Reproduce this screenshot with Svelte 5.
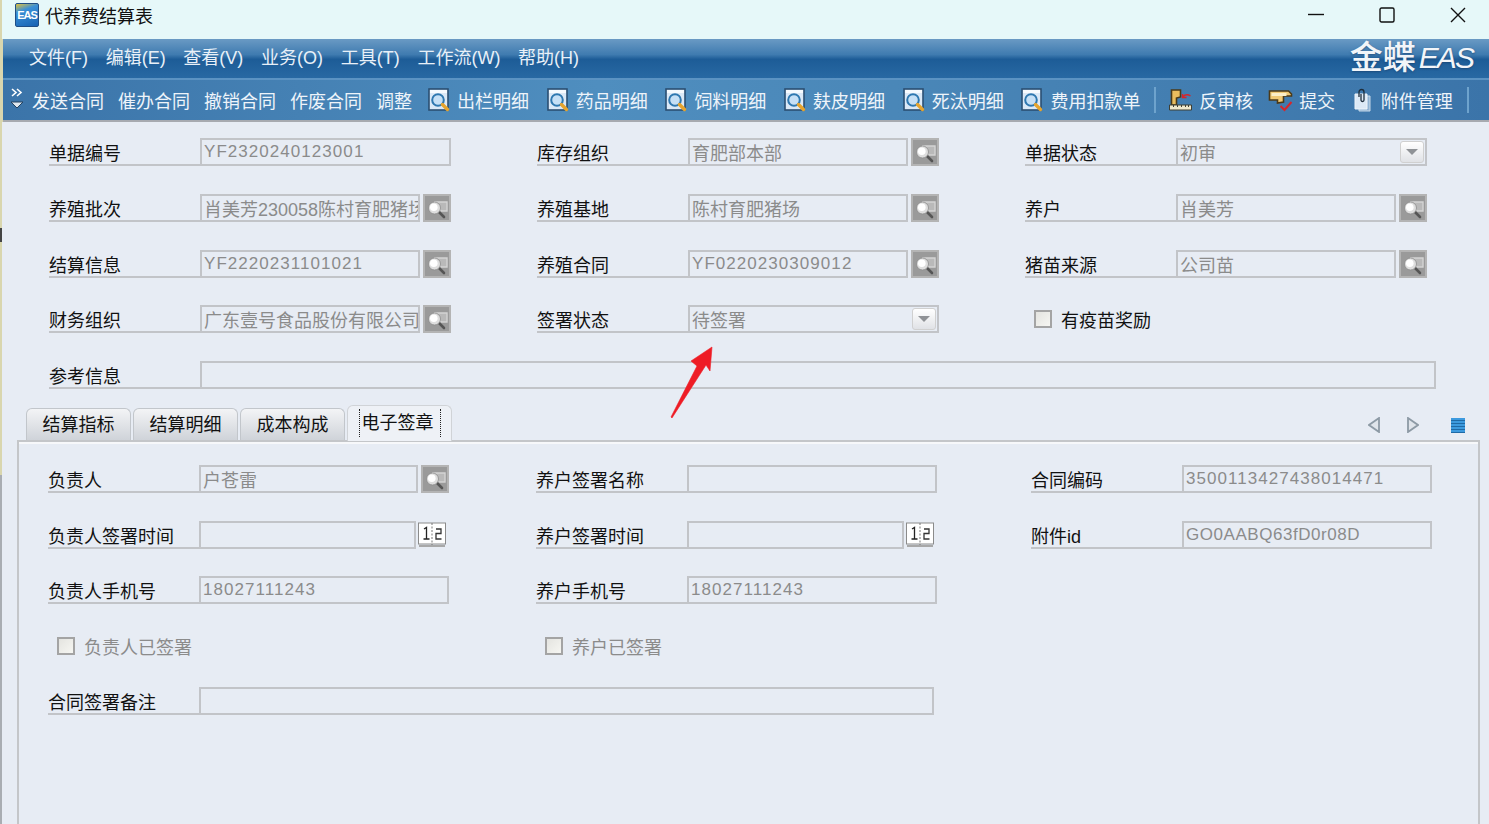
<script>
  const menus = ['文件(F)', '编辑(E)', '查看(V)', '业务(O)', '工具(T)', '工作流(W)', '帮助(H)'];
  const plainActions = ['发送合同', '催办合同', '撤销合同', '作废合同', '调整'];
  const detailActions = ['出栏明细', '药品明细', '饲料明细', '麸皮明细', '死汰明细', '费用扣款单'];

  const topFields = [
    { label: '单据编号', value: 'YF2320240123001', kind: 'text' },
    { label: '库存组织', value: '育肥部本部', kind: 'lookup' },
    { label: '单据状态', value: '初审', kind: 'select' },
    { label: '养殖批次', value: '肖美芳230058陈村育肥猪场', kind: 'lookup' },
    { label: '养殖基地', value: '陈村育肥猪场', kind: 'lookup' },
    { label: '养户', value: '肖美芳', kind: 'lookup' },
    { label: '结算信息', value: 'YF2220231101021', kind: 'lookup' },
    { label: '养殖合同', value: 'YF0220230309012', kind: 'lookup' },
    { label: '猪苗来源', value: '公司苗', kind: 'lookup' },
    { label: '财务组织', value: '广东壹号食品股份有限公司', kind: 'lookup' },
    { label: '签署状态', value: '待签署', kind: 'select' },
    { check: '有疫苗奖励', strong: true }
  ];

  const tabs = ['结算指标', '结算明细', '成本构成', '电子签章'];

  const signFields = [
    { label: '负责人', value: '户苍雷', kind: 'lookup' },
    { label: '养户签署名称', value: '', kind: 'text' },
    { label: '合同编码', value: '3500113427438014471', kind: 'text' },
    { label: '负责人签署时间', value: '', kind: 'date' },
    { label: '养户签署时间', value: '', kind: 'date' },
    { label: '附件id', value: 'GO0AABQ63fD0r08D', kind: 'text' },
    { label: '负责人手机号', value: '18027111243', kind: 'text' },
    { label: '养户手机号', value: '18027111243', kind: 'text' },
    { empty: true },
    { check: '负责人已签署' },
    { check: '养户已签署' },
    { empty: true }
  ];

  // ascii-only values are set a bit smaller and more open than the CJK ones
  const isLatin = (v) => /^[\x20-\x7e]+$/.test(v);
  const hasLower = (v) => /[a-z]/.test(v);
</script>

{#snippet detailIcon()}
  <svg class="tool-icon" viewBox="0 0 23 24">
    <rect x="1" y="1" width="19" height="21" fill="#dbe9f7" stroke="#2b4f72" stroke-width="1.6" />
    <rect x="2" y="2" width="17" height="3" fill="#f6fafe" />
    <circle cx="10" cy="12" r="5.8" fill="#c6e0f6" stroke="#2f78b0" stroke-width="2" />
    <path d="M14.5 16.5l5 5" stroke="#e6a42e" stroke-width="3.4" stroke-linecap="round" />
  </svg>
{/snippet}

{#snippet lookupButton()}
  <span class="lookup-btn">
    <svg viewBox="0 0 28 28" width="28" height="28">
      <path d="M12 8h12v9h-6z" fill="#b9b9b9" stroke="#d4d4d4" stroke-width="1.4" />
      <path d="M16 18l5 5" stroke="#555555" stroke-width="2.6" stroke-linecap="round" />
      <circle cx="11.5" cy="14" r="6" fill="#dedede" stroke="#8a8a8a" stroke-width="0.8" />
      <circle cx="10.8" cy="13.2" r="3.8" fill="#ffffff" />
    </svg>
  </span>
{/snippet}

{#snippet dateButton()}
  <svg class="date-btn" viewBox="0 0 28 26">
    <rect x="0.5" y="1" width="27" height="21" fill="#ffffff" stroke="#8b8b8b" />
    <path d="M1 23h26v2H1z" fill="#a8a8a8" />
    <path d="M14 1v22" stroke="#777777" stroke-dasharray="2 1.5" />
    <path d="M6 7l2.5-1.5V17M5.5 17h6" fill="none" stroke="#222222" stroke-width="1.3" />
    <path d="M18 7h5v4.5h-5V17h5.5" fill="none" stroke="#333333" stroke-width="1.3" />
  </svg>
{/snippet}

{#snippet field(item)}
  {#if item.empty}
    <div></div>
  {:else if item.check}
    <div class="check-row" class:strong={item.strong}>
      <span class="check-box"></span>
      <span>{item.check}</span>
    </div>
  {:else}
    <div class="field">
      <span class="field-label">{item.label}</span>
      <div class="field-box">
        <span class="field-value" class:latin={isLatin(item.value)} class:tight={hasLower(item.value)}>{item.value}</span>
        {#if item.kind === 'select'}
          <span class="drop-btn"><i></i></span>
        {/if}
      </div>
      {#if item.kind === 'lookup'}
        {@render lookupButton()}
      {:else if item.kind === 'date'}
        {@render dateButton()}
      {/if}
    </div>
  {/if}
{/snippet}

<div class="window">
  <header class="titlebar">
    <span class="app-icon">EAS</span>
    <span class="app-title">代养费结算表</span>
    <div class="win-controls">
      <svg viewBox="0 0 16 16"><path d="M0 7.5h16" /></svg>
      <svg viewBox="0 0 16 16"><rect x="1" y="1" width="14" height="14" rx="1.5" /></svg>
      <svg viewBox="0 0 16 16"><path d="M1 1l14 14M15 1L1 15" /></svg>
    </div>
  </header>

  <nav class="menubar">
    {#each menus as menu}
      <span>{menu}</span>
    {/each}
    <div class="brand"><b>金蝶</b><em>EAS</em></div>
  </nav>

  <div class="toolbar">
    <svg class="more" viewBox="0 0 14 26">
      <path d="M2 2l4 3.5L2 9M7 2l4 3.5L7 9" fill="none" stroke="#ffffff" stroke-width="1.6" />
      <path d="M1 15h12l-6 6z" fill="#dfe7ef" stroke="#24425f" />
    </svg>
    {#each plainActions as action}
      <span class="tool plain">{action}</span>
    {/each}
    {#each detailActions as action}
      <span class="tool">{@render detailIcon()}{action}</span>
    {/each}
    <i class="tool-sep"></i>
    <span class="tool short">
      <svg class="tool-icon wide" viewBox="0 0 24 24">
        <path d="M3 2h9v7l-4 1v7H3z" fill="#e9bd5e" stroke="#4a3a18" stroke-width="1.6" />
        <path d="M1 17h22v5H1z" fill="#efe8cc" stroke="#3f3f33" />
        <path d="M5 17v2M9 17v2M13 17v2M17 17v2M20 17v2" stroke="#3f3f33" />
        <path d="M22 8c-3-2-6-1-8 1M14 6v3.5h4" fill="none" stroke="#d8252a" stroke-width="1.5" />
      </svg>
      反审核
    </span>
    <span class="tool">
      <svg class="tool-icon wide" viewBox="0 0 24 24">
        <path d="M1 3h19l3 3v2h-8v6l-6 1V12H1z" fill="#f0c975" stroke="#4c3a18" stroke-width="1.6" />
        <path d="M3 5h15v3H3z" fill="#fbeec8" />
        <path d="M12 18l4 4 7-8" fill="none" stroke="#d8252a" stroke-width="2" />
      </svg>
      提交
    </span>
    <span class="tool">
      <svg class="tool-icon clip" viewBox="0 0 18 24">
        <path d="M6 8h11v15H6z" fill="#8fb3d4" stroke="#c6d8e8" />
        <path d="M2 6h12v15H2z" fill="#dce9f6" stroke="#eef4fa" />
        <path d="M6 9V4a2.5 2.5 0 0 1 5 0v8a1.5 1.5 0 0 1-3 0V6" fill="none" stroke="#1e2e3c" stroke-width="1.3" />
      </svg>
      附件管理
    </span>
    <i class="tool-sep"></i>
  </div>

  <main class="content">
    <section class="form-grid top">
      {#each topFields as item}
        {@render field(item)}
      {/each}
      <div class="field full">
        <span class="field-label">参考信息</span>
        <div class="field-box"></div>
      </div>
    </section>

    <div class="tab-head">
      {#each tabs as tab, i}
        <div class="tab" class:active={i === 3}><span>{tab}</span></div>
      {/each}
      <div class="tab-nav">
        <svg viewBox="0 0 12 16"><path d="M11 1v14L1 8z" fill="#dfe4ea" stroke="#8d9aa5" stroke-width="1.8" /></svg>
        <svg viewBox="0 0 12 16"><path d="M1 1v14l10-7z" fill="#dfe4ea" stroke="#8d9aa5" stroke-width="1.8" /></svg>
        <span class="tab-list"></span>
      </div>
    </div>

    <section class="tab-panel">
      <div class="form-grid sign">
        {#each signFields as item}
          {@render field(item)}
        {/each}
        <div class="field remark">
          <span class="field-label">合同签署备注</span>
          <div class="field-box"></div>
        </div>
      </div>
    </section>
  </main>

  <svg class="red-arrow" viewBox="0 0 50 80">
    <path d="M1 71L27 20l-6-5L42 1l-2 24-4-6L2 72z" fill="#ee1c25" stroke="#ee1c25" stroke-width="0.6" />
  </svg>
</div>

<style>
  :global(body) {
    margin: 0;
    overflow: hidden;
  }

  .window {
    position: relative;
    width: 1489px;
    height: 824px;
    box-sizing: border-box;
    padding-left: 2px;
    display: flex;
    flex-direction: column;
    overflow: hidden;
    background: linear-gradient(to bottom, #d9d6ae 0, #d9d6ae 228px, #444444 228px, #444444 242px, #d9d6ae 242px, #d9d6ae 475px, #a9adb2 475px);
    font-family: "Liberation Sans", "Noto Sans CJK SC", sans-serif;
    font-size: 18px;
    color: #111111;
  }

  .titlebar {
    height: 39px;
    flex: none;
    box-sizing: border-box;
    display: flex;
    align-items: center;
    padding: 0 0 9px 13px;
    background: #e6f8f9;
  }

  .app-icon {
    width: 24px;
    height: 24px;
    box-sizing: border-box;
    border: 1px solid #1f4e86;
    border-radius: 2px;
    background: linear-gradient(160deg, #e2c23c 0, #3a90d6 30%, #1762b3 100%);
    color: #ffffff;
    font-size: 11px;
    font-weight: bold;
    letter-spacing: -1px;
    line-height: 22px;
    text-align: center;
  }

  .app-title {
    margin-left: 6px;
    color: #111111;
  }

  .win-controls {
    margin-left: auto;
    display: flex;
    gap: 55px;
    padding-right: 23px;
  }

  .win-controls svg {
    width: 16px;
    height: 16px;
    fill: none;
    stroke: #111111;
    stroke-width: 1.4;
  }

  .menubar {
    height: 41px;
    flex: none;
    margin-left: 1px;
    box-sizing: border-box;
    display: flex;
    align-items: center;
    gap: 17.7px;
    padding: 0 16px 5px 26px;
    border-bottom: 2px solid #5b93c3;
    background: linear-gradient(to bottom, #6a9ac4 0, #3f7bb0 40%, #1d5c97 52%, #2869a3 100%);
    color: #e8f0f8;
  }

  .brand {
    margin-left: auto;
    display: flex;
    align-items: center;
    color: #f2f5f9;
    line-height: 1;
    padding-top: 3px;
    text-shadow: 0 1px 2px rgba(20, 50, 90, 0.5);
  }

  .brand b {
    font-size: 33px;
    font-weight: 500;
  }

  .brand em {
    margin-left: 3px;
    font-size: 30px;
    letter-spacing: -1.9px;
  }

  .toolbar {
    height: 42px;
    flex: none;
    margin-left: 1px;
    box-sizing: border-box;
    display: flex;
    align-items: center;
    padding-left: 7px;
    border-bottom: 2px solid #a7aab0;
    background: linear-gradient(to right, #3b74a9 0, #4f8ebf 40%, #4a87b8 60%, #3b74a9 100%);
    color: #eef4fa;
    white-space: nowrap;
  }

  .more {
    width: 14px;
    height: 26px;
    margin-right: 8px;
  }

  .tool {
    display: flex;
    align-items: center;
    gap: 6px;
    margin-right: 17.7px;
  }

  .tool.short {
    margin-right: 15px;
  }

  .tool.plain {
    margin-right: 14px;
  }

  .tool.plain:nth-of-type(5) {
    margin-right: 16px;
  }

  .tool-icon {
    width: 23px;
    height: 24px;
    flex: none;
  }

  .tool-icon.wide {
    width: 25px;
  }

  .tool-icon.clip {
    width: 18px;
    margin-right: 4px;
  }

  .tool-sep {
    width: 2px;
    height: 26px;
    margin: 0 12px 0 -4px;
    background: #6ea3cd;
  }

  .content {
    flex: 1;
    min-height: 0;
    display: flex;
    flex-direction: column;
    background: #e7ecf4;
  }

  .form-grid {
    display: grid;
    grid-auto-rows: 28px;
  }

  .form-grid.top {
    padding: 16px 0 0 47px;
    grid-template-columns: 488px 488px 403px;
    row-gap: 27.75px;
  }

  .form-grid.top .field {
    width: 402px;
  }

  .form-grid.top .field.full {
    width: 1387px;
  }

  .form-grid.sign {
    padding: 23px 0 0 30px;
    margin-left: -1px;
    grid-template-columns: 488px 495px 401px;
    row-gap: 27.5px;
  }

  .field {
    display: flex;
    height: 28px;
    width: 401px;
  }

  .field.full {
    grid-column: 1 / -1;
  }

  .field.remark {
    grid-column: 1 / 3;
    width: 886px;
  }

  .field-label {
    width: 151px;
    flex: none;
    box-sizing: border-box;
    border-bottom: 2px solid #c2c4c8;
    padding-top: 2px;
    line-height: 28px;
    white-space: nowrap;
  }

  .field-box {
    flex: 1;
    min-width: 0;
    box-sizing: border-box;
    display: flex;
    align-items: center;
    border: 2px solid #c2c4c8;
    padding-left: 2px;
    overflow: hidden;
  }

  .field-value {
    color: #8b8b8b;
    white-space: nowrap;
  }

  .field-value.latin {
    font-size: 17px;
    letter-spacing: 1.05px;
  }

  .field-value.tight {
    letter-spacing: 0.55px;
  }

  .lookup-btn {
    width: 28px;
    height: 28px;
    flex: none;
    margin-left: 3px;
    background: #9a9a9a;
    box-shadow: inset 0 0 0 2px #b4b4b4;
  }

  .lookup-btn svg {
    display: block;
  }

  .date-btn {
    width: 28px;
    height: 26px;
    flex: none;
    margin: 1px 3px 0 2px;
  }

  .drop-btn {
    width: 24px;
    height: 22px;
    margin-left: auto;
    margin-right: 1px;
    flex: none;
    box-sizing: border-box;
    display: flex;
    align-items: center;
    justify-content: center;
    border: 1px solid #d0d0d0;
    border-radius: 3px;
    background: linear-gradient(to bottom, #ffffff, #e0e2e6);
  }

  .drop-btn i {
    width: 0;
    height: 0;
    border-left: 6px solid transparent;
    border-right: 6px solid transparent;
    border-top: 6px solid #8f9296;
  }

  .check-row {
    display: flex;
    align-items: center;
    gap: 9px;
    padding-left: 9px;
    color: #8b8b8b;
  }

  .check-row.strong {
    color: #111111;
  }

  .check-box {
    width: 18px;
    height: 18px;
    box-sizing: border-box;
    border: 2px solid #a4a4a4;
    background: linear-gradient(135deg, #e4e4e0, #f6f6f2);
  }

  .tab-head {
    display: flex;
    align-items: flex-end;
    height: 51px;
    padding-left: 24px;
    flex: none;
    gap: 2px;
  }

  .tab {
    width: 105px;
    height: 32px;
    box-sizing: border-box;
    border: 1px solid #c2c6cb;
    border-bottom: 0;
    border-radius: 6px 6px 0 0;
    background: linear-gradient(to bottom, #f3f4f6, #cfd3d9);
    text-align: center;
    line-height: 33px;
  }

  .tab.active {
    height: 36px;
    margin-bottom: -1px;
    position: relative;
    background: #eef1f6;
    border-color: #d0d3d7;
    line-height: 35px;
  }

  .tab.active span {
    border-left: 1px dotted #222222;
    border-right: 1px dotted #222222;
    padding: 4px 6px 4px 2px;
  }

  .tab-nav {
    margin-left: auto;
    margin-right: 24px;
    display: flex;
    align-items: center;
    gap: 27px;
    height: 16px;
    padding-bottom: 7px;
  }

  .tab-nav svg {
    width: 12px;
    height: 16px;
  }

  .tab-nav svg:first-child {
    margin-left: -5px;
  }

  .tab-list {
    width: 14px;
    height: 15px;
    margin-left: 5px;
    background: repeating-linear-gradient(to bottom, #3d9ade 0, #3d9ade 2px, #1f6aa6 2px, #1f6aa6 3px);
  }

  .tab-panel {
    flex: 1;
    margin: 0 9px 0 15px;
    border: 2px solid #c4c6c9;
    border-bottom: 0;
    box-shadow: inset 0 2px 0 #f7f8fa;
  }

  .red-arrow {
    position: absolute;
    left: 670px;
    top: 346px;
    width: 50px;
    height: 80px;
  }
</style>
